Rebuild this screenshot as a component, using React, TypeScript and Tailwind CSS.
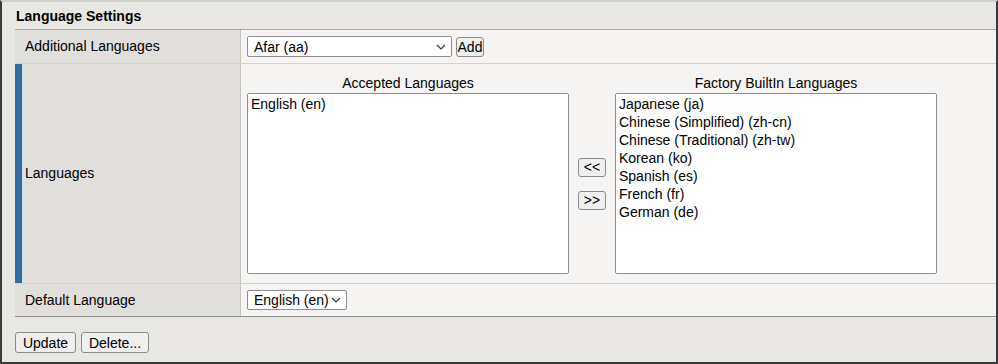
const font = { fontFamily: '"Liberation Sans", Arial, sans-serif' }

function Chevron() {
  return (
    <svg width="10" height="6" viewBox="0 0 10 6" className="shrink-0">
      <path d="M1 1 L5 5 L9 1" fill="none" stroke="#333" strokeWidth="1.1" />
    </svg>
  )
}

function Select({ value, width, height }: { value: string; width: string; height: string }) {
  return (
    <div
      className={`flex items-center justify-between bg-white border border-[#8f8f8f] rounded-[2px] pl-[6px] pr-[5px] text-[14px] text-black ${width} ${height}`}
    >
      <span className="leading-none">{value}</span>
      <Chevron />
    </div>
  )
}

function Btn({ label, className }: { label: string; className: string }) {
  return (
    <button
      className={`flex items-center justify-center bg-[#efefef] border border-[#8a8a8a] rounded-[3px] text-[14px] text-black leading-none ${className}`}
    >
      {label}
    </button>
  )
}

function ListBox({ title, items }: { title: string; items: string[] }) {
  return (
    <div className="flex flex-col w-[322px]">
      <div className="text-center text-[14px] leading-[18px] text-black h-[20px] pt-[1px]">{title}</div>
      <div className="h-[181px] bg-white border border-[#8f8f8f] rounded-[2px] px-[3px] py-[1px]">
        {items.map((item) => (
          <div key={item} className="text-[14px] leading-[18px] text-black whitespace-nowrap">
            {item}
          </div>
        ))}
      </div>
    </div>
  )
}

export default function App() {
  const builtIn = [
    'Japanese (ja)',
    'Chinese (Simplified) (zh-cn)',
    'Chinese (Traditional) (zh-tw)',
    'Korean (ko)',
    'Spanish (es)',
    'French (fr)',
    'German (de)',
  ]

  return (
    <div
      style={font}
      className="w-[998px] h-[364px] bg-[#e8e7e3] border-l-2 border-r-2 border-b-2 border-t-2 border-l-[#3a3a3a] border-r-[#3a3a3a] border-b-[#3a3a3a] border-t-[#cfcfcc] flex flex-col"
    >
      <div className="h-[27px] pl-[14px] pt-[1px] flex items-center">
        <h1 className="text-[14px] font-bold text-black">Language Settings</h1>
      </div>

      <div className="ml-[13px] border-t border-t-[#a9a9a6] border-b border-b-[#8e8e8b] flex flex-col">
        {/* Additional Languages */}
        <div className="flex h-[34px] border-b border-b-[#d2d1ce]">
          <div className="w-[226px] bg-[#e0dfdc] border-r border-r-[#c4c3c0] flex items-center pl-[10px] text-[14px] text-black">
            Additional Languages
          </div>
          <div className="flex-1 bg-[#f5f4f2] flex items-center pl-[6px] gap-[4px]">
            <Select value="Afar (aa)" width="w-[205px]" height="h-[21px]" />
            <Btn label="Add" className="w-[28px] h-[20px]" />
          </div>
        </div>

        {/* Languages */}
        <div className="flex h-[220px] border-b border-b-[#d2d1ce]">
          <div className="w-[226px] bg-[#e0dfdc] border-r border-r-[#c4c3c0] flex">
            <div className="w-[7px] bg-[#336ba3]" />
            <div className="flex items-center pl-[3px] text-[14px] text-black">Languages</div>
          </div>
          <div className="flex-1 bg-[#f5f4f2] flex items-start pl-[6px] pt-[9px]">
            <ListBox title="Accepted Languages" items={['English (en)']} />
            <div className="w-[46px] h-[201px] pt-[20px] flex flex-col items-center justify-center gap-[14px]">
              <Btn label="<<" className="w-[28px] h-[19px]" />
              <Btn label=">>" className="w-[28px] h-[19px]" />
            </div>
            <ListBox title="Factory BuiltIn Languages" items={builtIn} />
          </div>
        </div>

        {/* Default Language */}
        <div className="flex h-[32px]">
          <div className="w-[226px] bg-[#e0dfdc] border-r border-r-[#c4c3c0] flex items-center pl-[10px] text-[14px] text-black">
            Default Language
          </div>
          <div className="flex-1 bg-[#f5f4f2] flex items-center pl-[6px]">
            <Select value="English (en)" width="w-[100px]" height="h-[20px]" />
          </div>
        </div>
      </div>

      <div className="flex gap-[5px] pl-[13px] mt-[15px]">
        <Btn label="Update" className="w-[61px] h-[21px]" />
        <Btn label="Delete..." className="w-[68px] h-[21px]" />
      </div>
    </div>
  )
}
